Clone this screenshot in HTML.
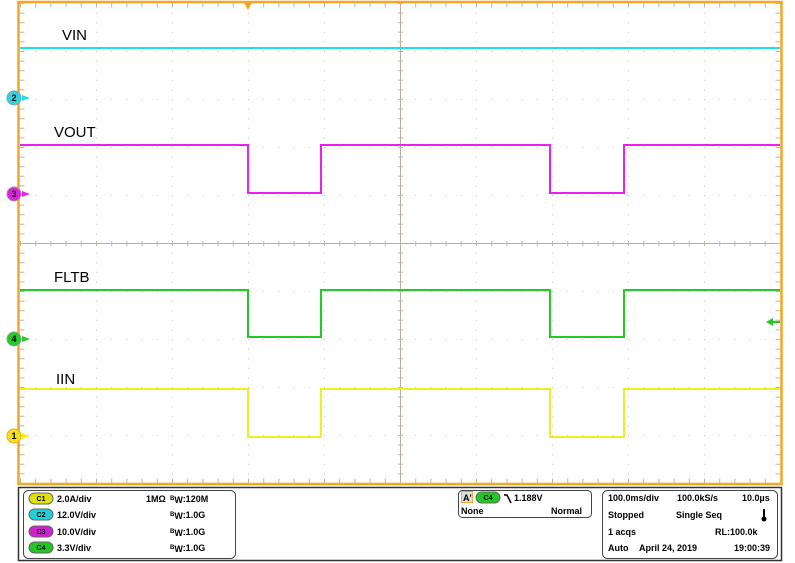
<!DOCTYPE html>
<html><head><meta charset="utf-8"><style>
body{margin:0;width:795px;height:563px;background:#fff;overflow:hidden;font-family:"Liberation Sans",Arial,sans-serif}
svg{position:absolute;left:0;top:0}
</style></head><body>
<svg width="795" height="563" viewBox="0 0 795 563" xmlns="http://www.w3.org/2000/svg" font-family="Liberation Sans, Arial, sans-serif">
<g stroke="#c8c0b0" stroke-width="1" stroke-dasharray="1 8.6">
<line x1="96.5" y1="3" x2="96.5" y2="483"/><line x1="172.5" y1="3" x2="172.5" y2="483"/><line x1="248.5" y1="3" x2="248.5" y2="483"/><line x1="324.5" y1="3" x2="324.5" y2="483"/><line x1="476.5" y1="3" x2="476.5" y2="483"/><line x1="552.5" y1="3" x2="552.5" y2="483"/><line x1="628.5" y1="3" x2="628.5" y2="483"/><line x1="704.5" y1="3" x2="704.5" y2="483"/>
</g>
<g stroke="#c8c0b0" stroke-width="1" stroke-dasharray="1 14.2">
<line x1="20" y1="51.5" x2="780" y2="51.5"/><line x1="20" y1="99.5" x2="780" y2="99.5"/><line x1="20" y1="147.5" x2="780" y2="147.5"/><line x1="20" y1="195.5" x2="780" y2="195.5"/><line x1="20" y1="291.5" x2="780" y2="291.5"/><line x1="20" y1="339.5" x2="780" y2="339.5"/><line x1="20" y1="387.5" x2="780" y2="387.5"/><line x1="20" y1="435.5" x2="780" y2="435.5"/>
</g>
<line x1="20" y1="243.5" x2="780" y2="243.5" stroke="#b8b098" stroke-width="1"/>
<line x1="400.5" y1="3" x2="400.5" y2="483" stroke="#b8b098" stroke-width="1"/>
<g stroke="#c0b8a0" stroke-width="1">
<line x1="20" y1="243.5" x2="780" y2="243.5" stroke-dasharray="1 14.2" stroke-width="5"/>
<line x1="400.5" y1="3" x2="400.5" y2="483" stroke-dasharray="1 8.6" stroke-width="5"/>
<line x1="20" y1="5" x2="780" y2="5" stroke-dasharray="1 14.2" stroke-width="5"/>
<line x1="20" y1="481" x2="780" y2="481" stroke-dasharray="1 14.2" stroke-width="5"/>
<line x1="22" y1="3" x2="22" y2="483" stroke-dasharray="1 8.6" stroke-width="5"/>
<line x1="778" y1="3" x2="778" y2="483" stroke-dasharray="1 8.6" stroke-width="5"/>
</g>
<rect x="18.5" y="2" width="763" height="482" fill="none" stroke="#f5a623" stroke-width="2.5"/>
<polygon points="244,3 252,3 248,10" fill="#f5a623"/>
<line x1="20" y1="48" x2="780" y2="48" stroke="#1ee0ea" stroke-width="2"/>
<polyline points="20,145 248,145 248,193 321,193 321,145 550,145 550,193 624,193 624,145 780,145" fill="none" stroke="#ee1eee" stroke-width="2"/>
<polyline points="20,290 248,290 248,337 321,337 321,290 550,290 550,337 624,337 624,290 780,290" fill="none" stroke="#22cc22" stroke-width="2"/>
<polyline points="20,389 248,389 248,437 321,437 321,389 550,389 550,437 624,437 624,389 780,389" fill="none" stroke="#eeee22" stroke-width="2"/>
<g font-size="15" fill="#000">
<text x="62" y="40">VIN</text><text x="54" y="137">VOUT</text><text x="54" y="282">FLTB</text><text x="56" y="384">IIN</text>
</g>
<g font-size="9" font-weight="bold" text-anchor="middle">
<polygon points="22,95 30,98 22,101" fill="#1ee0ea"/><circle cx="14" cy="98" r="7" fill="#2ad6e0" stroke="#999" stroke-width="1"/><text x="14" y="101" fill="#000">2</text>
<polygon points="22,191 30,194 22,197" fill="#ee1eee"/><circle cx="14" cy="194" r="7" fill="#e020e0" stroke="#999" stroke-width="1"/><text x="14" y="197" fill="#000">3</text>
<polygon points="22,336 30,339 22,342" fill="#22cc22"/><circle cx="14" cy="339" r="7" fill="#22cc22" stroke="#999" stroke-width="1"/><text x="14" y="342" fill="#000">4</text>
<polygon points="22,433 30,436 22,439" fill="#eeee22"/><circle cx="14" cy="436" r="7" fill="#f0e020" stroke="#f5a623" stroke-width="1"/><text x="14" y="439" fill="#000">1</text>
<polygon points="766,322 773,318 773,326" fill="#22cc22"/><line x1="772" y1="322" x2="780" y2="322" stroke="#22cc22" stroke-width="2"/>
</g>
<rect x="18.5" y="487.5" width="763" height="73" fill="#fff" stroke="#333" stroke-width="1.5"/>
<rect x="23.5" y="490.5" width="212" height="68" rx="5" fill="#fff" stroke="#444" stroke-width="1"/>
<rect x="458.5" y="490.5" width="133" height="27" rx="4" fill="#fff" stroke="#444" stroke-width="1"/>
<rect x="602.5" y="490.5" width="175" height="68" rx="5" fill="#fff" stroke="#444" stroke-width="1"/>
<g font-size="9" font-weight="bold" fill="#000">
<g font-size="7" text-anchor="middle">
<rect x="29" y="493" width="24" height="11" rx="5.5" fill="#e0e010" stroke="#666"/><text x="41" y="501">C1</text>
<rect x="29" y="509" width="24" height="11" rx="5.5" fill="#20d0d8" stroke="#666"/><text x="41" y="517">C2</text>
<rect x="29" y="526" width="24" height="11" rx="5.5" fill="#d020d0" stroke="#666"/><text x="41" y="534">C3</text>
<rect x="29" y="542" width="24" height="11" rx="5.5" fill="#20c820" stroke="#666"/><text x="41" y="550">C4</text>
<rect x="476" y="492" width="24" height="11" rx="5.5" fill="#20c820" stroke="#666"/><text x="488" y="500">C4</text>
</g>
<text x="57" y="502">2.0A/div</text><text x="57" y="518">12.0V/div</text><text x="57" y="535">10.0V/div</text><text x="57" y="551">3.3V/div</text>
<text x="146" y="502">1MΩ</text>
<text x="170" y="502"><tspan font-size="6" dy="-2">B</tspan><tspan dy="3">W</tspan><tspan dy="-1">:120M</tspan></text>
<text x="170" y="518"><tspan font-size="6" dy="-2">B</tspan><tspan dy="3">W</tspan><tspan dy="-1">:1.0G</tspan></text>
<text x="170" y="535"><tspan font-size="6" dy="-2">B</tspan><tspan dy="3">W</tspan><tspan dy="-1">:1.0G</tspan></text>
<text x="170" y="551"><tspan font-size="6" dy="-2">B</tspan><tspan dy="3">W</tspan><tspan dy="-1">:1.0G</tspan></text>
<rect x="461.5" y="491.5" width="11" height="11" fill="#ddd" stroke="#f5a623"/><text x="463" y="501">A'</text>
<path d="M504,495 L507,495 L511,503" fill="none" stroke="#000" stroke-width="1.5"/>
<text x="514" y="501">1.188V</text>
<text x="461" y="514">None</text><text x="551" y="514">Normal</text>
<text x="608" y="501">100.0ms/div</text><text x="677" y="501">100.0kS/s</text><text x="742" y="501">10.0µs</text>
<text x="608" y="518">Stopped</text><text x="676" y="518">Single Seq</text>
<text x="608" y="535">1 acqs</text><text x="715" y="535">RL:100.0k</text>
<text x="608" y="551">Auto</text><text x="639" y="551">April 24, 2019</text><text x="734" y="551">19:00:39</text>
<rect x="763" y="509" width="2" height="9" fill="#000"/><circle cx="764" cy="519" r="2.5" fill="#000"/>
</g>
</svg>
</body></html>
